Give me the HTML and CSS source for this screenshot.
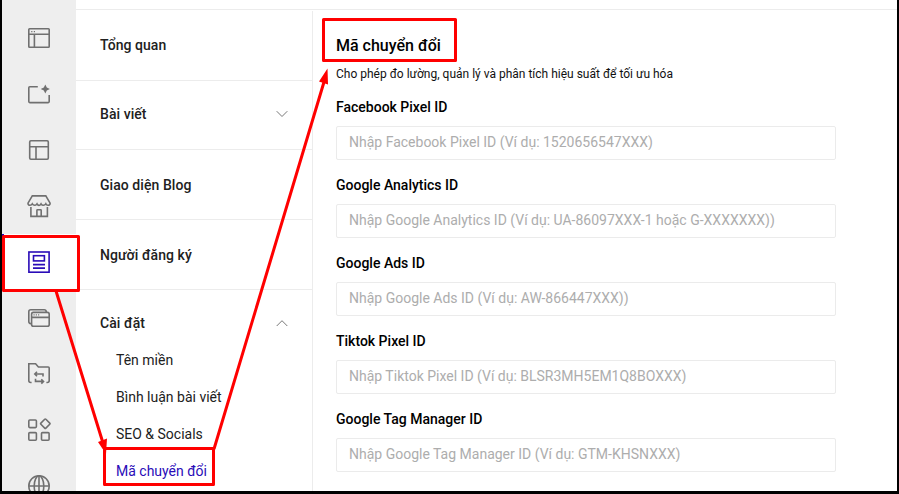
FILE: index.html
```
<!DOCTYPE html>
<html lang="vi">
<head>
<meta charset="utf-8">
<title>Mã chuyển đổi</title>
<link rel="stylesheet" href="styles.css">
</head>
<body>
<div class="window">
  <nav class="rail">
    <a class="rail-item"><svg viewBox="0 0 24 24"><rect x="1.8" y="2.7" width="20.4" height="18.6" rx=".8"/><path d="M2 8.3H22M7.4 8.3V21"/><path class="dots" d="M4.2 5.7H5.4M6.8 5.7H8"/></svg></a>
    <a class="rail-item"><svg viewBox="0 0 24 24"><path d="M10.8 4.7H2.8Q1.8 4.7 1.8 5.7V19.6Q1.8 20.6 2.8 20.6H21.2Q22.2 20.6 22.2 19.6V13"/><path class="solid" d="M18.3 2.4L19.8 5.500L22.900 7L19.800 8.500L18.300 11.600L16.800 8.500L13.700 7L16.800 5.500Z"/></svg></a>
    <a class="rail-item"><svg viewBox="0 0 24 24"><rect x="2.7" y="2.7" width="18.6" height="18.6" rx="1.2"/><path d="M3 8.7H21M9 8.7V21"/></svg></a>
    <a class="rail-item"><svg viewBox="0 0 24 24"><path d="M5.3 1.9H18.8L23.1 9.2Q23.1 11.2 21 11.2Q19.4 11.2 18.8 9.8Q17.8 11.4 16 11.2Q14.6 11 14 9.8Q13 11.4 12 11.4Q10.8 11.4 10 9.8Q9 11.4 7.8 11.2Q6 11 5.3 9.8Q4.5 11.2 3 11.2Q1 11.2 1 9.2Z"/><path d="M3.9 13V22.4H20.4V13M9.9 22V16.4Q9.9 15.8 10.5 15.8H13.6Q14.2 15.8 14.2 16.4V22"/></svg></a>
    <a class="rail-item active"><svg viewBox="0 0 24 24"><rect x="1.9" y="2" width="20.2" height="20.2"/><rect x="6.5" y="5.7" width="10.9" height="5.2"/><path d="M6 14.6H18M6 18.1H18"/></svg></a>
    <a class="rail-item"><svg viewBox="0 0 24 24"><rect x="4.6" y="6.4" width="17.6" height="13.8" rx="1.8"/><path d="M4.6 11.4H22.2M4.6 17.6H3.8Q1.8 17.6 1.8 15.6V5.7Q1.8 3.7 3.8 3.7H17.2Q19.2 3.7 19.2 5.7V6.4"/><path class="dots" d="M6.5 8.9H7.6M8.8 8.9H9.9M11.1 8.9H12.2"/></svg></a>
    <a class="rail-item"><svg viewBox="0 0 24 24"><path d="M4.6 20.5H3.8Q1.8 20.5 1.8 18.5V1.8H8.6L11.4 5H21.2Q22.2 5 22.2 6V18.5Q22.2 20.5 20.2 20.5H19.4"/><path d="M16 14.5V12H8M10 9.8L7.8 12L10 14.2M8.5 16.7V19.4H16.3M14.3 17.2L16.5 19.4L14.3 21.6"/></svg></a>
    <a class="rail-item"><svg viewBox="0 0 24 24"><rect x="1.8" y="2" width="7.6" height="7.6" rx="1"/><rect x="1.8" y="14.6" width="7.6" height="7.6" rx="1"/><rect x="14.5" y="14.6" width="7.6" height="7.6" rx="1"/><path d="M17.7 1.3Q18.3 .7 18.9 1.3L22.7 5.1Q23.3 5.7 22.7 6.3L18.9 10.1Q18.3 10.7 17.7 10.1L13.9 6.3Q13.3 5.7 13.9 5.1Z"/></svg></a>
    <a class="rail-item"><svg viewBox="0 0 24 24"><circle cx="12" cy="12" r="10.2"/><ellipse cx="12" cy="12" rx="4.8" ry="10.2"/><path d="M12 2V22M2 12H22"/></svg></a>
  </nav>
  <div class="page">
    <header class="topbar"></header>
    <div class="body">
      <aside class="menu">
        <div class="menu-item first">Tổng quan</div>
        <div class="menu-item second">Bài viết<svg class="chevron" viewBox="0 0 12 8"><path d="M.7 1.2L6 6.5L11.3 1.2"/></svg></div>
        <div class="menu-item">Giao diện Blog</div>
        <div class="menu-item">Người đăng ký</div>
        <div class="menu-item last">Cài đặt<svg class="chevron" viewBox="0 0 12 8"><path d="M.7 7L6 1.7L11.3 7"/></svg></div>
        <ul class="submenu">
          <li>Tên miền</li>
          <li>Bình luận bài viết</li>
          <li>SEO &amp; Socials</li>
          <li class="current">Mã chuyển đổi</li>
        </ul>
      </aside>
      <main class="content">
        <h1>Mã chuyển đổi</h1>
        <p class="intro">Cho phép đo lường, quản lý và phân tích hiệu suất để tối ưu hóa</p>
        <label class="field"><span>Facebook Pixel ID</span><input placeholder="Nhập Facebook Pixel ID (Ví dụ: 1520656547XXX)"></label>
        <label class="field"><span>Google Analytics ID</span><input placeholder="Nhập Google Analytics ID (Ví dụ: UA-86097XXX-1 hoặc G-XXXXXXX))"></label>
        <label class="field"><span>Google Ads ID</span><input placeholder="Nhập Google Ads ID (Ví dụ: AW-866447XXX))"></label>
        <label class="field"><span>Tiktok Pixel ID</span><input placeholder="Nhập Tiktok Pixel ID (Ví dụ: BLSR3MH5EM1Q8BOXXX)"></label>
        <label class="field"><span>Google Tag Manager ID</span><input placeholder="Nhập Google Tag Manager ID (Ví dụ: GTM-KHSNXXX)"></label>
      </main>
    </div>
  </div>
</div>
<svg class="annotations" viewBox="0 0 899 494">
  <rect x="3.5" y="236.5" width="75" height="54"/>
  <rect x="104.5" y="448.5" width="109" height="36"/>
  <rect x="323.5" y="19.5" width="132" height="41"/>
  <path d="M56 291L103 443M214 449L324 82"/>
  <path class="head" d="M106 454L98 442L107 438.500ZM327.500 68.500L319 81.500L328 84.500Z"/>
</svg>
</body>
</html>
```
FILE: styles.css
```
* { box-sizing: border-box; }
body {
  margin: 0;
  width: 899px;
  height: 494px;
  overflow: hidden;
  font-family: Roboto, sans-serif;
  font-size: 14px;
  color: #212121;
}
.window {
  display: flex;
  height: 494px;
  border: solid #000;
  border-width: 0 2px 3px;
  background: #fff;
  overflow: hidden;
}
.rail {
  flex: 0 0 74px;
  padding-top: 10px;
  background: #eee;
}
.rail-item {
  display: flex;
  align-items: center;
  justify-content: center;
  height: 56px;
}
.rail-item svg {
  width: 24px;
  height: 24px;
  fill: none;
  stroke: #707070;
  stroke-width: 1.6;
}
.rail-item .solid { fill: #707070; stroke: none; }
.rail-item .dots { stroke-width: 1.2; }
.rail-item.active {
  background: #fff;
  box-shadow: inset 2px 0 #2000b8;
}
.rail-item.active svg { stroke: #2a0cb8; stroke-width: 1.6; }
.page {
  flex: 1;
  display: flex;
  flex-direction: column;
}
.topbar {
  flex: 0 0 10px;
  border-bottom: 1px solid #ececec;
}
.body { flex: 1; display: flex; }
.menu {
  flex: 0 0 237px;
  margin-top: 1px;
  border-right: 1px solid #ececec;
}
.menu-item {
  display: flex;
  align-items: center;
  justify-content: space-between;
  height: 70px;
  padding: 0 24px;
  border-bottom: 1px solid #ececec;
  font-weight: 500;
  letter-spacing: .06px;
}
.menu-item.first { height: 70px; padding-bottom: 1px; }
.menu-item.second { height: 69px; padding-bottom: 2px; }
.menu-item.last { height: 66px; border: 0; }
.chevron {
  width: 12px;
  height: 8px;
  fill: none;
  stroke: #777;
  stroke-width: 1;
}
.submenu {
  margin: -14px 0 0;
  padding: 0 0 0 40px;
  list-style: none;
}
.submenu li { height: 37px; line-height: 37px; }
.submenu .current { color: #2a0cb8; }
.content { padding: 24px 0 0 23px; }
h1 {
  margin: 0;
  font-size: 16px;
  font-weight: 500;
  line-height: 24px;
  color: #000;
}
.intro {
  margin: 7px 0 13px;
  font-size: 12px;
  line-height: 18px;
  color: #111;
}
.field { display: block; height: 78px; }
.field span {
  display: block;
  height: 30px;
  line-height: 22px;
  font-weight: 500;
  color: #000;
}
.field input {
  display: block;
  width: 500px;
  height: 34px;
  padding: 0 12px 2px;
  border: 1px solid #ebebeb;
  border-radius: 2px;
  font: inherit;
}
.field input::placeholder { color: #adadad; opacity: 1; }
/* Callouts drawn over the interface */
.annotations {
  position: absolute;
  top: 0;
  left: 0;
  width: 899px;
  height: 494px;
  fill: none;
  stroke: #f00;
  stroke-width: 3;
  stroke-linejoin: round;
  pointer-events: none;
}
.annotations .head { fill: #f00; stroke: none; }
```
